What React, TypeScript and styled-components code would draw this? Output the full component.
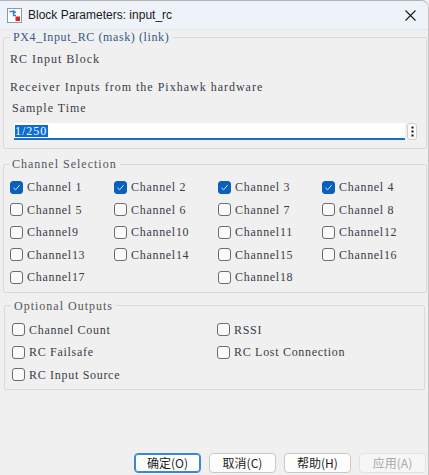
import React from "react";
import styled, { createGlobalStyle } from "styled-components";

const GlobalStyle = createGlobalStyle`
  html, body { margin: 0; padding: 0; background: #f0f0f0; }
  * { box-sizing: border-box; }
`;

const Window = styled.div`
  width: 429px;
  height: 475px;
  display: flex;
  flex-direction: column;
  background: #f0f0f0;
  border-top: 1px solid #b4b4b4;
  border-right: 1px solid #c4c4c4;
  border-top-right-radius: 8px;
  overflow: hidden;
  font-family: "Liberation Serif", serif;
  font-size: 12px;
  color: #3a3c48;
`;

const TitleBar = styled.div`
  height: 29px;
  flex: none;
  display: flex;
  align-items: center;
  padding-left: 7px;
  background: #eef2f9;
  border-bottom: 1px solid #e4e6ea;
`;

const TitleText = styled.span`
  margin-left: 6px;
  font-family: "Liberation Sans", sans-serif;
  font-size: 12px;
  color: #1a1a1a;
  flex: 1;
`;

const CloseButton = styled.div`
  width: 30px;
  height: 29px;
  display: flex;
  align-items: center;
  justify-content: center;
  margin-right: 3px;
`;

const Group = styled.fieldset<{ $inset?: boolean; $top?: number }>`
  margin: ${(p) => p.$top ?? 0}px ${(p) => (p.$inset ? "3px 0 4px" : "1px 0 3px")};
  padding: 0;
  border: 1px solid #dadada;
  border-radius: 2px;
  min-width: 0;
`;

const Legend = styled.legend<{ $accent?: boolean; $offset: number; $spacing: number }>`
  margin-left: ${(p) => p.$offset}px;
  padding: 0 3px;
  line-height: 14px;
  letter-spacing: ${(p) => p.$spacing}px;
  color: ${(p) => (p.$accent ? "#34598c" : "#55555c")};
`;

const MaskBody = styled.div`
  display: flex;
  flex-direction: column;
  padding: 8px 0 8px 6px;
`;

const Line = styled.div<{ $gap: number; $indent?: number }>`
  line-height: 14px;
  letter-spacing: 1px;
  margin-top: ${(p) => p.$gap}px;
  padding-left: ${(p) => p.$indent ?? 0}px;
  white-space: pre;
`;

const InputRow = styled.div`
  display: flex;
  align-items: stretch;
  gap: 1px;
  margin-top: 8px;
  padding-left: 4px;
  height: 17px;
`;

const TextInput = styled.div`
  flex: none;
  width: 391px;
  background: #ffffff;
  border-bottom: 2px solid #1a6fc4;
  display: flex;
  align-items: center;
  padding-left: 1px;
`;

const Selected = styled.span`
  background: #0a6cd4;
  color: #ffffff;
  line-height: 12px;
  letter-spacing: 1px;
  padding-right: 1px;
`;

const DotsButton = styled.div`
  width: 10px;
  margin-left: 1px;
  background: #fbfbfb;
  border: 1px solid #d0d0d0;
  border-radius: 3px;
  display: flex;
  align-items: center;
  justify-content: center;
`;

const CheckGrid = styled.div<{ $cols: number; $colWidth: number; $pad: string }>`
  display: grid;
  grid-template-columns: repeat(${(p) => p.$cols}, ${(p) => p.$colWidth}px);
  grid-auto-rows: 22.5px;
  padding: ${(p) => p.$pad};
`;

const CheckItem = styled.label`
  display: flex;
  align-items: center;
  gap: 4px;
  white-space: pre;
  letter-spacing: 0.7px;
  line-height: 14px;
`;

const Box = styled.span<{ $checked?: boolean }>`
  width: 13px;
  height: 13px;
  flex: none;
  border-radius: 3px;
  border: 1px solid ${(p) => (p.$checked ? "#0a5fbf" : "#6c6c6c")};
  background: ${(p) => (p.$checked ? "#0a5fbf" : "#fafafa")};
  display: flex;
  align-items: center;
  justify-content: center;
`;

const Spacer = styled.div`
  flex: 1;
`;

const Footer = styled.div`
  display: flex;
  justify-content: flex-end;
  gap: 8px;
  padding: 0 2px 2px 0;
`;

const DialogButton = styled.button<{ $primary?: boolean }>`
  width: 67px;
  height: 20px;
  padding: 0;
  border-radius: 4px;
  border: 1px solid ${(p) => (p.$primary ? "#3b86d6" : "#c9c9c9")};
  box-shadow: ${(p) => (p.$primary ? "inset 0 0 0 1px #3b86d6" : "none")};
  background: #fdfdfd;
  font-family: "Noto Sans CJK SC", sans-serif;
  font-size: 12px;
  line-height: 18px;
  color: #1e1e1e;
  &:disabled {
    background: #f6f6f6;
    border-color: #e2e2e2;
    color: #a8a8a8;
  }
`;

const Check = () => (
  <svg width="9" height="9" viewBox="0 0 9 9">
    <path d="M1.5 4.8 L3.6 6.8 L7.6 2.2" fill="none" stroke="#dfeaf8" strokeWidth="1" />
  </svg>
);

const CheckBox = ({ label, checked }: { label: string; checked?: boolean }) => (
  <CheckItem>
    <Box $checked={checked}>{checked && <Check />}</Box>
    {label}
  </CheckItem>
);

const BlockIcon = () => (
  <svg width="15" height="15" viewBox="0 0 15 15">
    <rect x="0.5" y="0.5" width="14" height="14" fill="#ffffff" stroke="#8c98a8" />
    <path d="M2.5 3.5 H6.5 V7.5 H9" fill="none" stroke="#3b7fc8" strokeWidth="1.4" />
    <path d="M6 1.8 L9.5 4.2 L6 6.6 Z" fill="#3b7fc8" />
    <rect x="8.5" y="8.5" width="4.5" height="4.5" fill="#d42a1e" />
  </svg>
);

const CloseIcon = () => (
  <svg width="11" height="11" viewBox="0 0 11 11">
    <path d="M0.5 0.5 L10.5 10.5 M10.5 0.5 L0.5 10.5" stroke="#1a1a1a" strokeWidth="1.1" />
  </svg>
);

const Dots = () => (
  <svg width="3" height="11" viewBox="0 0 3 11">
    <rect x="0.5" y="0.5" width="2" height="2" fill="#111" />
    <rect x="0.5" y="4.5" width="2" height="2" fill="#111" />
    <rect x="0.5" y="8.5" width="2" height="2" fill="#111" />
  </svg>
);

const channels: { label: string; checked?: boolean }[] = [
  { label: "Channel 1", checked: true },
  { label: "Channel 2", checked: true },
  { label: "Channel 3", checked: true },
  { label: "Channel 4", checked: true },
  { label: "Channel 5" },
  { label: "Channel 6" },
  { label: "Channel 7" },
  { label: "Channel 8" },
  { label: "Channel9" },
  { label: "Channel10" },
  { label: "Channel11" },
  { label: "Channel12" },
  { label: "Channel13" },
  { label: "Channel14" },
  { label: "Channel15" },
  { label: "Channel16" },
  { label: "Channel17" },
  { label: "" },
  { label: "Channel18" },
];

const outputs = ["Channel Count", "RSSI", "RC Failsafe", "RC Lost Connection", "RC Input Source"];

export default function App() {
  return (
    <>
      <GlobalStyle />
      <Window>
        <TitleBar>
          <BlockIcon />
          <TitleText>Block Parameters: input_rc</TitleText>
          <CloseButton>
            <CloseIcon />
          </CloseButton>
        </TitleBar>

        <Group>
          <Legend $accent $offset={6} $spacing={0.6}>PX4_Input_RC (mask) (link)</Legend>
          <MaskBody>
            <Line $gap={0}>RC Input Block</Line>
            <Line $gap={14}>Receiver Inputs from the Pixhawk hardware</Line>
            <Line $gap={7} $indent={2}>Sample Time</Line>
            <InputRow>
              <TextInput>
                <Selected>1/250</Selected>
              </TextInput>
              <DotsButton>
                <Dots />
              </DotsButton>
            </InputRow>
          </MaskBody>
        </Group>

        <Group $top={8}>
          <Legend $offset={5} $spacing={1}>Channel Selection</Legend>
          <CheckGrid $cols={4} $colWidth={104} $pad="5px 0 3px 6px">
            {channels.map((c, i) =>
              c.label ? <CheckBox key={i} label={c.label} checked={c.checked} /> : <span key={i} />
            )}
          </CheckGrid>
        </Group>

        <Group $inset $top={6}>
          <Legend $offset={6} $spacing={1}>Optional Outputs</Legend>
          <CheckGrid $cols={2} $colWidth={205} $pad="6px 0 3px 7px">
            {outputs.map((o) => (
              <CheckBox key={o} label={o} />
            ))}
          </CheckGrid>
        </Group>

        <Spacer />

        <Footer>
          <DialogButton $primary>确定(O)</DialogButton>
          <DialogButton>取消(C)</DialogButton>
          <DialogButton>帮助(H)</DialogButton>
          <DialogButton disabled>应用(A)</DialogButton>
        </Footer>
      </Window>
    </>
  );
}
